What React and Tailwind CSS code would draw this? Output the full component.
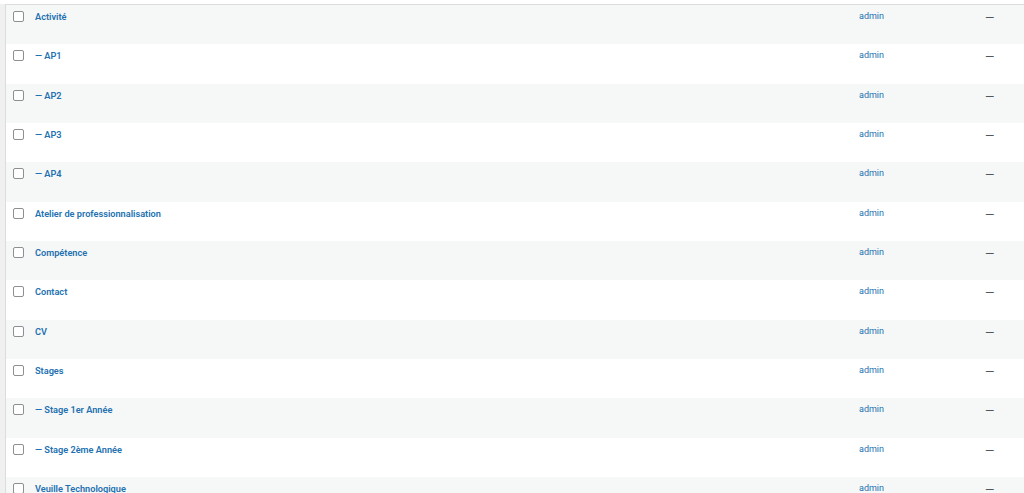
import React from "react";

const rows = [
  "Activité",
  "— AP1",
  "— AP2",
  "— AP3",
  "— AP4",
  "Atelier de professionnalisation",
  "Compétence",
  "Contact",
  "CV",
  "Stages",
  "— Stage 1er Année",
  "— Stage 2ème Année",
  "Veuille Technologique",
];

const App = () => {
  return (
    <div
      className="h-[493px] w-[1024px] overflow-hidden bg-[#f0f0f1]"
      style={{ fontFamily: "Roboto, sans-serif" }}
    >
      <div className="h-[4px] bg-white" />
      <div className="ml-[5px] border-l border-t border-[#dcdcde] bg-white">
        {rows.map((title, i) => (
          <div
            key={i}
            className={`flex h-[39.33px] items-start ${
              i % 2 === 0 ? "bg-[#f6f7f7]" : "bg-white"
            }`}
          >
            <div className="w-[29px] shrink-0 pl-[7px] pt-[6px]">
              <div className="h-[11px] w-[11px] rounded-[2px] border border-[#8c8f94] bg-white" />
            </div>
            <div className="flex-1 pt-[5px] text-[9.2px] leading-[13px] font-semibold text-[#2271b1]">
              {title}
            </div>
            <div className="w-[126px] shrink-0 pt-[5px] text-[9px] leading-[13px] text-[#2271b1]">
              admin
            </div>
            <div className="w-[39px] shrink-0 pt-[7px] text-[12px] leading-[13px] text-[#50575e]">
              —
            </div>
          </div>
        ))}
      </div>
    </div>
  );
};

export default App;
